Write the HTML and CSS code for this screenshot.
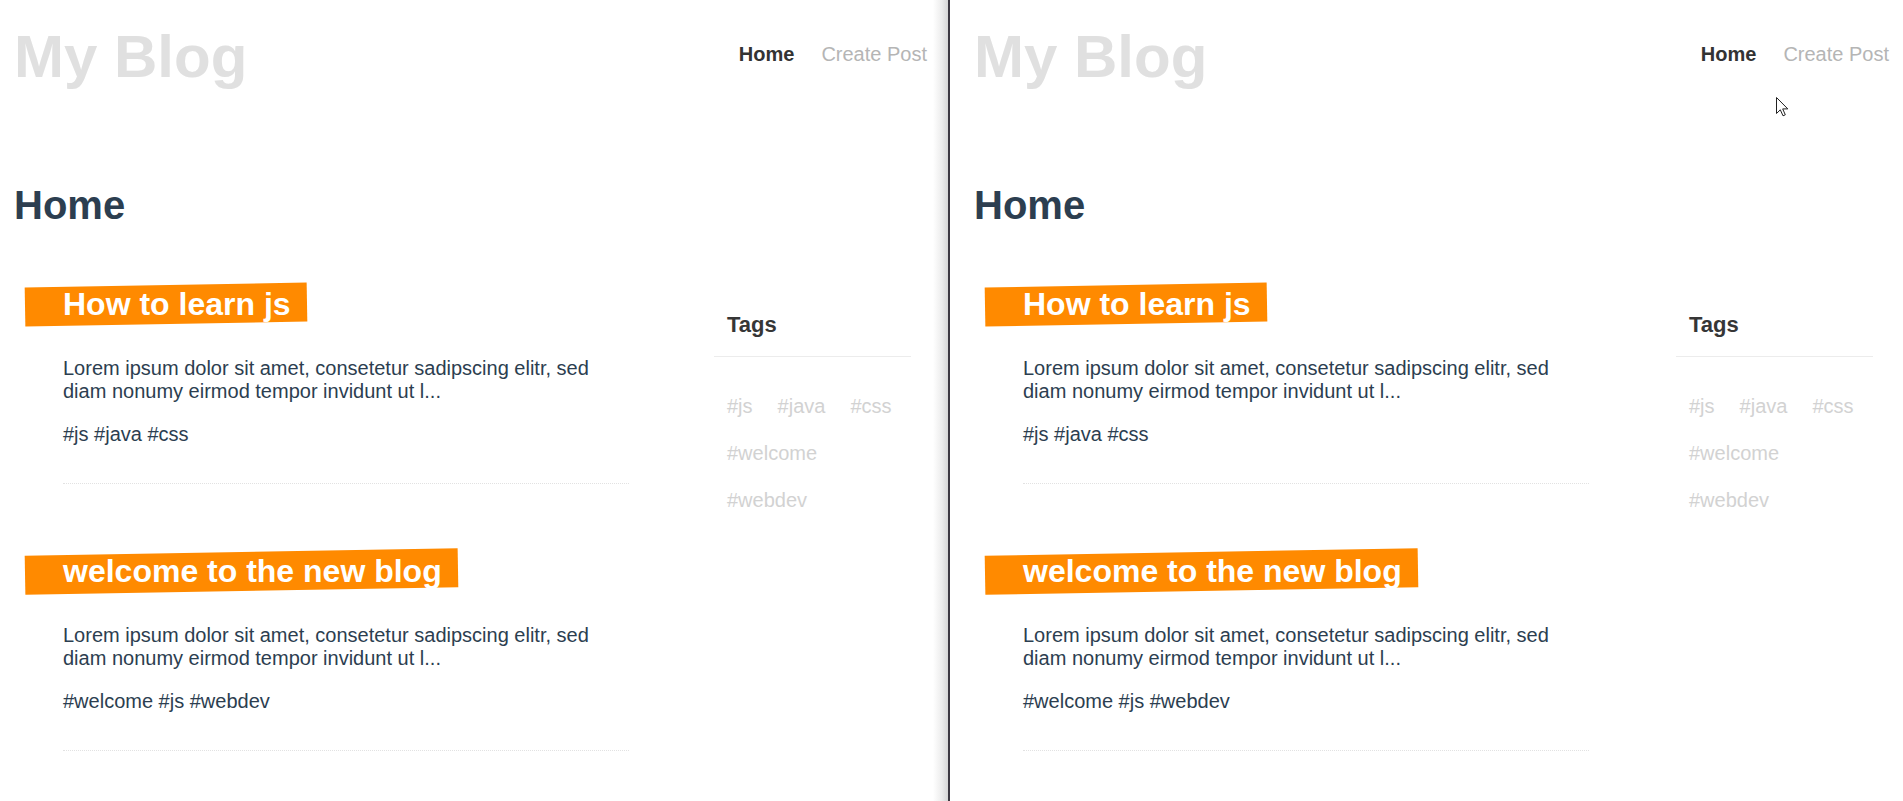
FILE: index.html
```html
<!DOCTYPE html>
<html lang="en">
<head>
<meta charset="utf-8">
<title>My Blog</title>
<link rel="stylesheet" href="styles.css">
</head>
<body>
<div class="desk">
  <section class="window window--left">
    <header class="site-header">
      <div class="logo">My Blog</div>
      <nav class="nav">
        <a class="nav-link nav-link--active">Home</a>
        <a class="nav-link">Create Post</a>
      </nav>
    </header>
    <h1 class="page-title">Home</h1>
    <div class="layout">
      <div class="posts">
        <article class="post">
          <h2 class="post-title">How to learn js</h2>
          <div class="post-content">
            <p class="post-body">Lorem ipsum dolor sit amet, consetetur sadipscing elitr, sed diam nonumy eirmod tempor invidunt ut l...</p>
            <p class="post-tags">#js #java #css</p>
          </div>
        </article>
        <article class="post">
          <h2 class="post-title">welcome to the new blog</h2>
          <div class="post-content">
            <p class="post-body">Lorem ipsum dolor sit amet, consetetur sadipscing elitr, sed diam nonumy eirmod tempor invidunt ut l...</p>
            <p class="post-tags">#welcome #js #webdev</p>
          </div>
        </article>
      </div>
      <aside class="sidebar">
        <h3 class="sidebar-title">Tags</h3>
        <div class="tag-list">
          <span class="tag">#js</span>
          <span class="tag">#java</span>
          <span class="tag">#css</span>
          <span class="tag">#welcome</span>
          <span class="tag">#webdev</span>
        </div>
      </aside>
    </div>
  </section>

  <section class="window window--right">
    <header class="site-header">
      <div class="logo">My Blog</div>
      <nav class="nav">
        <a class="nav-link nav-link--active">Home</a>
        <a class="nav-link">Create Post</a>
      </nav>
    </header>
    <h1 class="page-title">Home</h1>
    <div class="layout">
      <div class="posts">
        <article class="post">
          <h2 class="post-title">How to learn js</h2>
          <div class="post-content">
            <p class="post-body">Lorem ipsum dolor sit amet, consetetur sadipscing elitr, sed diam nonumy eirmod tempor invidunt ut l...</p>
            <p class="post-tags">#js #java #css</p>
          </div>
        </article>
        <article class="post">
          <h2 class="post-title">welcome to the new blog</h2>
          <div class="post-content">
            <p class="post-body">Lorem ipsum dolor sit amet, consetetur sadipscing elitr, sed diam nonumy eirmod tempor invidunt ut l...</p>
            <p class="post-tags">#welcome #js #webdev</p>
          </div>
        </article>
      </div>
      <aside class="sidebar">
        <h3 class="sidebar-title">Tags</h3>
        <div class="tag-list">
          <span class="tag">#js</span>
          <span class="tag">#java</span>
          <span class="tag">#css</span>
          <span class="tag">#welcome</span>
          <span class="tag">#webdev</span>
        </div>
      </aside>
    </div>
    <svg class="cursor" width="13" height="20" viewBox="0 0 13 20" aria-hidden="true">
      <path d="M0.5 0.5 L0.5 16.5 L4.3 12.8 L7 18.8 L9.3 17.8 L6.7 11.9 L11.8 11.9 Z" fill="#fff" stroke="#222" stroke-width="1" stroke-linejoin="round"/>
    </svg>
  </section>
</div>
</body>
</html>
```

FILE: styles.css
```css
* {
  box-sizing: border-box;
}

html, body {
  margin: 0;
  padding: 0;
  background: #fff;
}

body {
  width: 1903px;
  height: 801px;
  overflow: hidden;
  font-family: "Liberation Sans", Arial, Helvetica, sans-serif;
  color: #2c3e50;
}

.desk {
  display: flex;
  margin-left: -10px;
  width: 1930px;
  height: 801px;
}

.window {
  position: relative;
  flex: 0 0 960px;
  width: 960px;
  height: 801px;
  padding: 0 21px 0 24px;
  background: #fff;
}

.window--left {
  border-right: 2px solid #3d3942;
  background: linear-gradient(to right, #fff calc(100% - 15px), #ececec calc(100% - 6px), #d6d6d6 100%);
}

.site-header {
  display: flex;
  justify-content: space-between;
  align-items: center;
  padding-top: 22px;
}

.logo {
  font-size: 60px;
  font-weight: 700;
  line-height: 69px;
  color: #e0e0e0;
}

.nav {
  display: flex;
  gap: 27px;
  padding-bottom: 5px;
  font-size: 20px;
  line-height: 23px;
}

.nav-link {
  color: #b5b5b5;
  text-decoration: none;
}

.nav-link--active {
  color: #333;
  font-weight: 700;
}

.page-title {
  margin: 91px 0 0;
  font-size: 40px;
  line-height: 46px;
  font-weight: 700;
  color: #2c3e50;
}

.layout {
  display: flex;
  align-items: flex-start;
  margin-top: 57px;
}

.posts {
  width: 604px;
  margin-left: 11px;
}

.post {
  margin-bottom: 68px;
}

.post-title {
  position: relative;
  isolation: isolate;
  width: fit-content;
  margin: 0 0 34px;
  padding: 0 16px 0 38px;
  font-size: 32px;
  line-height: 38px;
  font-weight: 700;
  color: #fff;
}

.post-title::before {
  content: "";
  position: absolute;
  top: 0;
  bottom: -1px;
  left: 0;
  right: 0;
  background: #ff8a00;
  transform: rotate(-1deg);
  z-index: -1;
}

.post-content {
  margin-left: 38px;
  padding-bottom: 37px;
  border-bottom: 1px dotted #e2e2e2;
}

.post-body {
  margin: 0 0 20px;
  font-size: 20px;
  line-height: 23px;
  color: #2c3e50;
}

.post-tags {
  margin: 0;
  font-size: 20px;
  line-height: 23px;
  color: #2c3e50;
}

.sidebar {
  width: 197px;
  margin-left: auto;
  margin-right: 16px;
}

.sidebar-title {
  margin: 0;
  padding: 27px 13px 19px;
  font-size: 22px;
  line-height: 25px;
  font-weight: 700;
  color: #363636;
  border-bottom: 1px solid #ececec;
}

.tag-list {
  display: flex;
  flex-wrap: wrap;
  column-gap: 25px;
  padding: 26px 12px 0 13px;
}

.tag {
  padding: 12px 0;
  font-size: 20px;
  line-height: 23px;
  color: #d2d2d2;
}

.cursor {
  position: absolute;
  left: 826px;
  top: 97px;
}
```
